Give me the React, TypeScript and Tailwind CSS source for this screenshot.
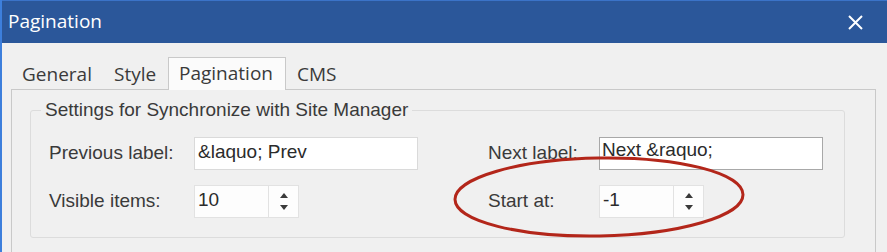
import React from "react";

const segoe = { fontFamily: '"Open Sans", "Noto Sans", sans-serif' };
const arial = { fontFamily: '"Liberation Sans", Arial, sans-serif' };

function Spinner({ value }: { value: string }) {
  return (
    <div className="flex h-[33px]">
      <div className="w-[75px] h-full bg-[#fdfdfd] border border-[#e2e2e2] pl-[3px] text-[19px] leading-[28px] text-[#2b2b2b]">
        {value}
      </div>
      <div className="w-[31px] h-full bg-[#fdfdfd] border border-[#e2e2e2] -ml-px flex flex-col items-center justify-center gap-[7px]">
        <svg width="8" height="5" viewBox="0 0 8 5"><path d="M4 0 L8 5 L0 5 Z" fill="#3a3a3a" /></svg>
        <svg width="8" height="5" viewBox="0 0 8 5"><path d="M0 0 L8 0 L4 5 Z" fill="#3a3a3a" /></svg>
      </div>
    </div>
  );
}

export default function App() {
  return (
    <div className="relative w-[887px] h-[252px] overflow-hidden bg-[#f0f0f0] border-l-2 border-[#3d7fdc] flex flex-col">
      <div className="h-[43px] shrink-0 bg-[#2b579a] border-t border-[#3b73c8] flex items-center justify-between pl-[6px] pr-[24px]">
        <span className="text-white text-[19px] leading-none -mt-px" style={segoe}>Pagination</span>
        <svg width="15" height="15" viewBox="0 0 15 15">
          <path d="M1 1 L14 14 M14 1 L1 14" stroke="#ffffff" strokeWidth="2" />
        </svg>
      </div>
      <div className="pl-[9px] pr-[11px] pt-[14px] flex flex-col">
        <div className="flex items-end h-[33px] -mb-px text-[19px] text-[#3a3a3a]" style={segoe}>
          <div className="w-[91px] ml-[2px] pl-[9px] h-[32px] leading-[32px]">General</div>
          <div className="w-[64px] pl-[10px] h-[32px] leading-[32px]">Style</div>
          <div className="w-[118px] pl-[10px] h-[33px] leading-[31px] bg-[#fbfbfb] border border-b-0 border-[#c9c9c9] relative z-10">Pagination</div>
          <div className="pl-[11px] h-[32px] leading-[32px]">CMS</div>
        </div>
        <div className="border border-[#c9c9c9] bg-[#f0f0f0] h-[200px] pl-[18px] pt-[9px]">
          <fieldset className="w-[815px] h-[139px] border border-[#dcdcdc] rounded-[3px] pl-[18px] pt-[16px] mt-0" style={arial}>
            <legend className="-ml-[8px] px-[4px] text-[19px] leading-[22px] text-[#3a3a3a]">
              Settings for Synchronize with Site Manager
            </legend>
            <div className="grid grid-cols-[145px_224px_70px_111px_224px] gap-y-[15px] text-[19px] text-[#3a3a3a] items-center">
              <div>Previous label:</div>
              <div className="h-[33px] bg-white border border-[#dadada] pl-[3px] leading-[28px] text-[#2b2b2b]">&amp;laquo; Prev</div>
              <div />
              <div>Next label:</div>
              <div className="h-[33px] bg-white border border-[#a8a8a8] pl-[2px] leading-[24px] text-[#2b2b2b]">Next &amp;raquo;</div>
              <div>Visible items:</div>
              <div><Spinner value="10" /></div>
              <div />
              <div>Start at:</div>
              <div><Spinner value="-1" /></div>
            </div>
          </fieldset>
        </div>
      </div>
      <svg className="absolute left-0 top-0 pointer-events-none" width="887" height="252" viewBox="0 0 887 252">
        <ellipse cx="597" cy="197" rx="144" ry="39" fill="none" stroke="#b3261a" strokeWidth="3" transform="rotate(-1 597 197)" />
      </svg>
    </div>
  );
}
